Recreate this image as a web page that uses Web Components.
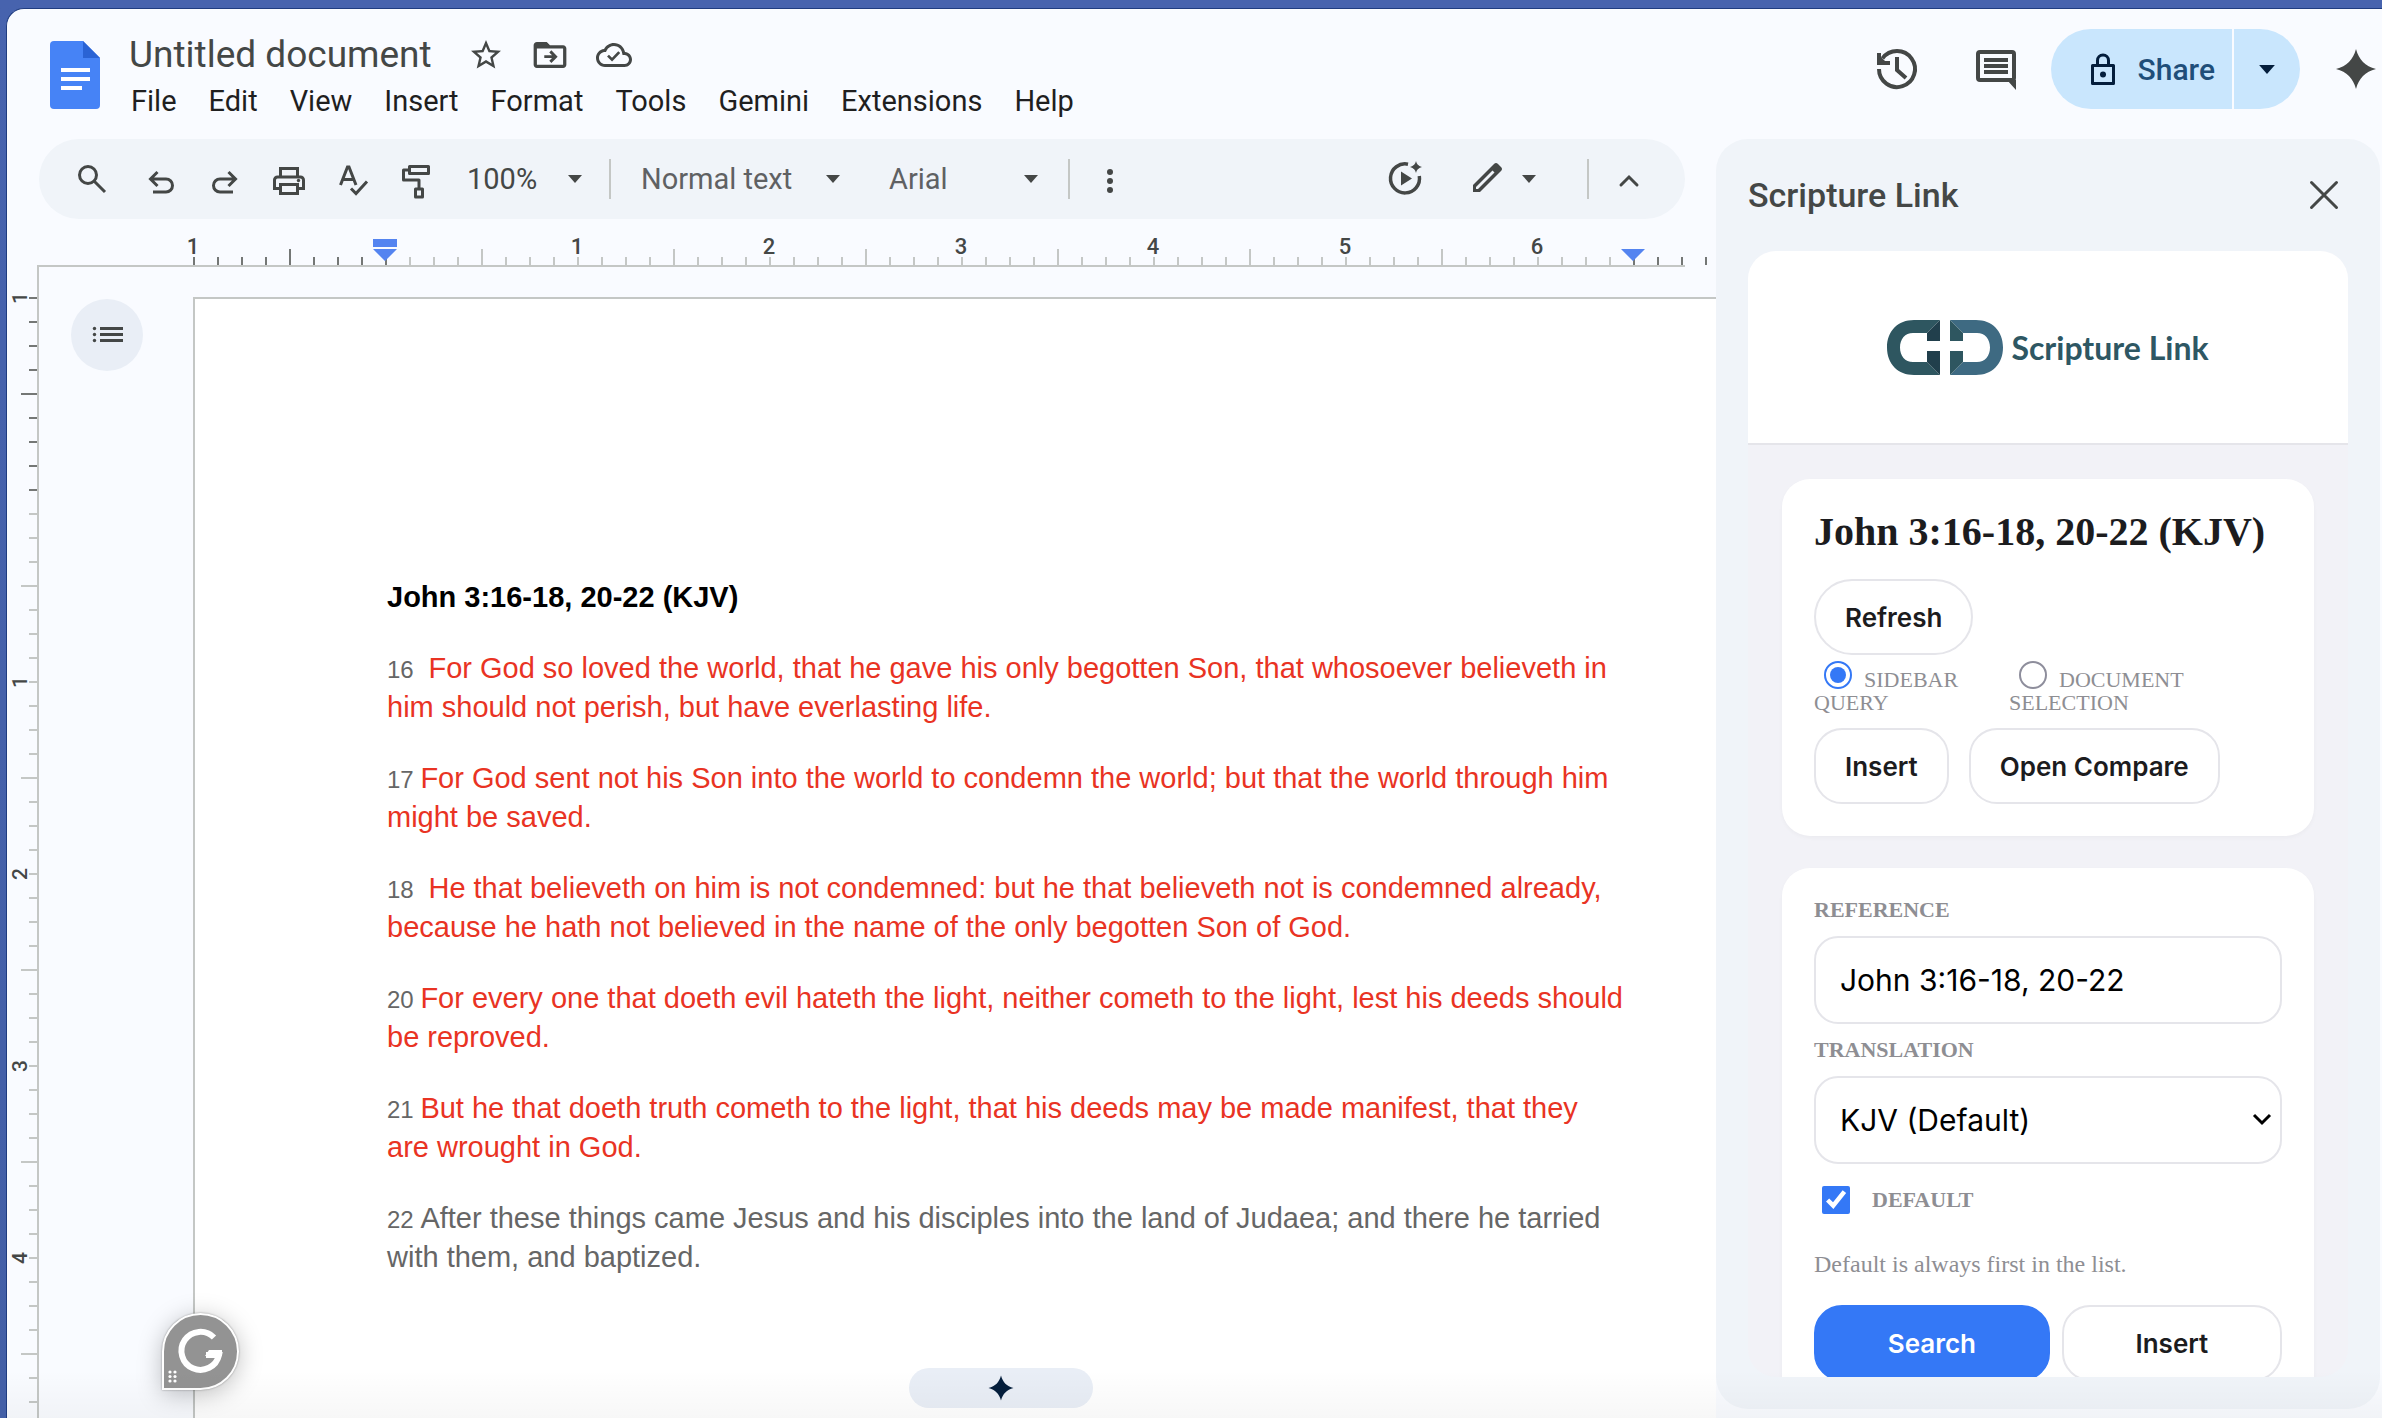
<!DOCTYPE html>
<html lang="en">
<head>
<meta charset="utf-8">
<title>Untitled document</title>
<style>
  html, body {
    height: 100%;
    margin: 0;
  }

  body {
    box-sizing: border-box;
    padding: 8px 0 0 6px;
    background: linear-gradient(#4763ae, #435fa6);
    font-family: Roboto, "Liberation Sans", sans-serif;
    color: #1f1f1f;
    overflow: hidden;
  }
</style>
</head>
<body>
<docs-app>
  <docs-header slot="header" name="Untitled document"></docs-header>
  <docs-toolbar slot="toolbar"></docs-toolbar>
  <docs-page heading="John 3:16-18, 20-22 (KJV)">
    <bible-verse number="16" wide>For God so loved the world, that he gave his only begotten Son, that whosoever believeth in him should not perish, but have everlasting life.</bible-verse>
    <bible-verse number="17">For God sent not his Son into the world to condemn the world; but that the world through him might be saved.</bible-verse>
    <bible-verse number="18" wide>He that believeth on him is not condemned: but he that believeth not is condemned already, because he hath not believed in the name of the only begotten Son of God.</bible-verse>
    <bible-verse number="20">For every one that doeth evil hateth the light, neither cometh to the light, lest his deeds should be reproved.</bible-verse>
    <bible-verse number="21">But he that doeth truth cometh to the light, that his deeds may be made manifest, that they<br>are wrought in God.</bible-verse>
    <bible-verse number="22" plain>After these things came Jesus and his disciples into the land of Judaea; and there he tarried with them, and baptized.</bible-verse>
  </docs-page>
  <side-panel slot="panel" name="Scripture Link">
    <passage-card heading="John 3:16-18, 20-22 (KJV)"></passage-card>
    <search-card></search-card>
  </side-panel>
</docs-app>

<script>
const stroke = 'fill="none" stroke="currentColor"';

const icons = {
  star: ['0 0 24 24', '<path d="M22 9.24l-7.19-.62L12 2 9.19 8.63 2 9.24l5.46 4.73L5.82 21 12 17.27 18.18 21l-1.63-7.03L22 9.24zM12 15.4l-3.76 2.27 1-4.28-3.32-2.88 4.38-.38L12 6.1l1.71 4.04 4.38.38-3.32 2.88 1 4.28L12 15.4z"/>'],
  move: ['1 1 22 22', `<path d="M20 6h-8l-2-2H4c-1.1 0-2 .9-2 2v12c0 1.1.9 2 2 2h16c1.1 0 2-.9 2-2V8c0-1.1-.9-2-2-2zm0 12H4V8h16v10z"/><path ${stroke} stroke-width="1.8" d="M8.5 13H15M12.2 9.8l3.2 3.2-3.2 3.2"/>`],
  cloud: ['0 0 24 24', `<path d="M19.35 10.04C18.67 6.59 15.64 4 12 4 9.11 4 6.6 5.64 5.35 8.04 2.34 8.36 0 10.91 0 14c0 3.31 2.69 6 6 6h13c2.76 0 5-2.24 5-5 0-2.64-2.05-4.78-4.65-4.96zM19 18H6c-2.21 0-4-1.79-4-4 0-2.05 1.53-3.76 3.56-3.97l1.07-.11.5-.95C8.08 7.14 9.94 6 12 6c2.62 0 4.88 1.86 5.39 4.43l.3 1.5 1.53.11c1.56.1 2.78 1.41 2.78 2.96 0 1.65-1.35 3-3 3z"/><path ${stroke} stroke-width="1.8" d="M8 12.4l2.7 2.7 4.8-5"/>`],
  history: ['0 0 48 48', `<path ${stroke} stroke-width="4" d="M6 24a18 18 0 1 0 3.5-10.6M6 8v10h11M24 12v13l9 8"/><path d="M4 8l12 12H4z"/>`],
  comment: ['0 0 48 48', `<rect ${stroke} stroke-width="4" x="6" y="7" width="36" height="28" rx="2"/><path d="M35 35h9v10zM12 13h24v4H12zM12 19h24v4H12zM12 25h24v4H12z"/>`],
  spark: ['0 0 48 48', '<path d="M24 4C27 15 33 21 44 24 33 27 27 33 24 44 21 33 15 27 4 24 15 21 21 15 24 4z"/>'],
  lock: ['0 0 32 40', `<path ${stroke} stroke-width="3" d="M5.5 16.5h21v18h-21zM10.5 16v-4.5a5.5 5.5 0 0 1 11 0V16" stroke-linejoin="round"/><circle cx="16" cy="25.5" r="3"/>`],
  caret: ['0 0 14 8', '<path d="M0 0h14L7 8z"/>'],
  search: ['0 0 40 40', `<circle ${stroke} stroke-width="3" cx="16" cy="16" r="8.5"/><path ${stroke} stroke-width="3" d="M22 22l11 11"/>`],
  undo: ['0 0 40 40', `<path ${stroke} stroke-width="3" d="M10 20h15a6.5 6.5 0 0 1 0 13H12M16.5 13L9.5 20l7 7"/>`],
  redo: ['0 0 40 40', `<path ${stroke} stroke-width="3" d="M30 20H15a6.5 6.5 0 0 0 0 13h13M23.5 13l7 7-7 7"/>`],
  print: ['0 0 40 40', `<path ${stroke} stroke-width="3" d="M11.5 17V9.5h17V17M11 29.5H5.5V21a3 3 0 0 1 3-3h23a3 3 0 0 1 3 3v8.5H29M11.5 25.5h17v9h-17z"/><circle cx="29.5" cy="21.5" r="1.7"/>`],
  spell: ['0 0 40 40', `<path ${stroke} stroke-width="3" d="M7.5 26L14.5 8h1.5l7 18M10 20.5h10.5M18 29.5l5 5 11-12"/>`],
  paint: ['1 0 40 40', `<path ${stroke} stroke-width="3" stroke-linejoin="round" d="M13.5 7.5h19v7h-19zM13 11H7.500v10H23v9M19.500 30h7v8h-7z"/>`],
  dots: ['0 0 40 40', '<circle cx="20" cy="13" r="3"/><circle cx="20" cy="22" r="3"/><circle cx="20" cy="31" r="3"/>'],
  play: ['0 0 40 40', `<path ${stroke} stroke-width="3.5" d="M23 5.200A14.500 14.500 0 1 0 34.300 17"/><path d="M16 12.500v14L27 19.500zM31 2c1 3.500 2 4.500 6 6-4 1.500-5 2.500-6 6-1-3.500-2-4.500-6-6 4-1.500 5-2.500 6-6z"/>`],
  pencil: ['0 0 40 40', `<path fill-rule="evenodd" d="M6 33v-7L27 5q2-2 4 0l3 3q2 2 0 4L13 33zM9 30h2L27.500 13.500l-2-2L9 28z"/>`],
  up: ['0 0 40 40', `<path ${stroke} stroke-width="3" stroke-linecap="round" d="M12 26l8-8 8 8"/>`],
  close: ['0 0 40 40', `<path ${stroke} stroke-width="3" stroke-linecap="round" d="M7.5 7.5l25 25M32.5 7.5l-25 25"/>`],
  list: ['-1 0 32 20', '<path d="M8 2h23v3H8zM8 8h23v3H8zM8 14h23v3H8z"/><circle cx="2.5" cy="3.5" r="1.7"/><circle cx="2.5" cy="9.5" r="1.7"/><circle cx="2.5" cy="15.5" r="1.7"/>'],
  down: ['0 0 20 14', `<path ${stroke} stroke-width="3" d="M2 2l8 8 8-8"/>`]
};

const icon = (name, width, height = width) => {
  const [box, shape] = icons[name];
  return `<svg width="${width}" height="${height}" viewBox="${box}" fill="currentColor" aria-hidden="true">${shape}</svg>`;
};

const buttonReset = `
  button {
    font: inherit;
    color: inherit;
    background: none;
    border: 0;
    padding: 0;
    margin: 0;
    display: inline-flex;
    align-items: center;
    justify-content: center;
  }

  svg {
    display: block;
    flex: none;
  }
`;

class BaseElement extends HTMLElement {
  constructor() {
    super();
    this.root = this.attachShadow({ mode: 'open' });
  }

  connectedCallback() {
    this.root.innerHTML = `<style>${this.styles()}</style>${this.render()}`;
  }

  styles() {
    return '';
  }

  render() {
    return '<slot></slot>';
  }
}

class DocsApp extends BaseElement {
  styles() {
    return `
      ${buttonReset}
      :host {
        box-sizing: border-box;
        height: 100%;
        display: flex;
        flex-direction: column;
        position: relative;
        background: #f9fbff;
        border: 1px solid #1f3c80;
        border-width: 1px 0 0 1px;
        border-radius: 18px 0 0 0;
        overflow: hidden;
      }

      .body {
        flex: 1;
        min-height: 0;
        display: flex;
      }

      main {
        flex: 1;
        min-width: 0;
        display: flex;
        flex-direction: column;
        position: relative;
        overflow: hidden;
      }

      .workspace {
        flex: 1;
        min-height: 0;
        display: flex;
      }

      .canvas {
        flex: 1;
        min-width: 0;
        display: flex;
        align-items: flex-start;
        gap: 50px;
        padding: 30px 0 0 32px;
        border-left: 2px solid #c4c7c5;
        overflow: hidden;
      }

      .outline {
        flex: none;
        width: 72px;
        height: 72px;
        margin-top: 2px;
        border-radius: 50%;
        background: #e9eef6;
        color: #444746;
      }

      .ask {
        position: absolute;
        left: 902px;
        bottom: 10px;
        width: 184px;
        height: 40px;
        border-radius: 20px;
        background: #e9eef6;
        color: #041e3c;
      }

      grammar-badge {
        position: absolute;
        left: 155px;
        bottom: 28px;
      }

      .shade {
        position: absolute;
        inset: auto 0 0 0;
        height: 48px;
        background: linear-gradient(transparent, rgba(0, 0, 0, 0.03));
        pointer-events: none;
      }
    `;
  }

  render() {
    /*html*/
    return `
      <slot name="header"></slot>
      <div class="body">
        <main>
          <slot name="toolbar"></slot>
          <docs-ruler></docs-ruler>
          <div class="workspace">
            <docs-ruler vertical></docs-ruler>
            <div class="canvas">
              <button class="outline" aria-label="Show outline">${icon('list', 32, 20)}</button>
              <slot></slot>
            </div>
          </div>
          <button class="ask" aria-label="Ask Gemini">${icon('spark', 30)}</button>
          <grammar-badge></grammar-badge>
        </main>
        <slot name="panel"></slot>
      </div>
      <div class="shade"></div>
    `;
  }
}

class DocsHeader extends BaseElement {
  styles() {
    return `
      ${buttonReset}
      :host {
        flex: none;
        display: flex;
        align-items: flex-start;
        padding: 20px 2px 30px 43px;
        height: 80px;
      }

      .logo {
        margin-top: 12px;
      }

      .names {
        margin-left: 29px;
        flex: 1;
      }

      .title {
        display: flex;
        align-items: center;
        gap: 28px;
        height: 52px;
        color: #444746;
      }

      h1 {
        margin: 0 8px 0 0;
        font-size: 37px;
        font-weight: 400;
        line-height: 48px;
      }

      nav {
        display: flex;
        gap: 32px;
        padding-left: 2px;
        font-size: 29px;
        line-height: 40px;
      }

      .actions {
        display: flex;
        align-items: center;
        gap: 51px;
        height: 80px;
        color: #444746;
      }

      .share {
        display: flex;
        gap: 2px;
        margin: 0 -19px 0 -20px;
        color: #041e3c;
      }

      .share button {
        height: 80px;
        background: #c9e6fd;
      }

      .share .main {
        gap: 19px;
        padding: 0 17px 0 36px;
        border-radius: 40px 0 0 40px;
        font-size: 30px;
        font-weight: 500;
      }

      .share .main span {
        color: #1f4e79;
      }

      .share .more {
        width: 66px;
        border-radius: 0 40px 40px 0;
      }
    `;
  }

  render() {
    const menus = ['File', 'Edit', 'View', 'Insert', 'Format', 'Tools', 'Gemini', 'Extensions', 'Help'];
    /*html*/
    return `
      <svg class="logo" width="50" height="68" viewBox="0 0 50 68" aria-hidden="true">
        <path fill="#4683f6" d="M4 0h29l17 17v47q0 4-4 4H4q-4 0-4-4V4q0-4 4-4z"/>
        <path fill="#2a63d4" d="M33 0l17 17H33z"/>
        <path fill="#fff" d="M11 27h29v4H11zM11 36h29v4H11zM11 45h21v4H11z"/>
      </svg>
      <div class="names">
        <div class="title">
          <h1>${this.getAttribute('name')}</h1>
          <button aria-label="Star">${icon('star', 36)}</button>
          <button aria-label="Move">${icon('move', 36)}</button>
          <button aria-label="Saved to Drive">${icon('cloud', 36)}</button>
        </div>
        <nav>${menus.map(menu => `<button>${menu}</button>`).join('')}</nav>
      </div>
      <div class="actions">
        <button aria-label="Version history">${icon('history', 48)}</button>
        <button aria-label="Comments">${icon('comment', 48)}</button>
        <div class="share">
          <button class="main">${icon('lock', 32, 40)}<span>Share</span></button>
          <button class="more" aria-label="Sharing options">${icon('caret', 16, 9)}</button>
        </div>
        <button aria-label="Gemini">${icon('spark', 48)}</button>
      </div>
    `;
  }
}

class ToolbarSelect extends BaseElement {
  styles() {
    return `
      :host {
        display: grid;
        align-items: center;
        height: 48px;
      }

      select, svg {
        grid-area: 1 / 1;
      }

      select {
        appearance: none;
        width: 100%;
        border: 0;
        padding: 0;
        background: none;
        font: inherit;
        color: inherit;
      }

      svg {
        justify-self: end;
        color: #444746;
        pointer-events: none;
      }
    `;
  }

  render() {
    return `
      <select aria-label="${this.getAttribute('label')}"><option>${this.getAttribute('value')}</option></select>
      ${icon('caret', 16, 8)}
    `;
  }
}

class DocsToolbar extends BaseElement {
  styles() {
    return `
      ${buttonReset}
      :host {
        flex: none;
        display: flex;
        align-items: center;
        height: 80px;
        margin: 0 31px 0 32px;
        padding: 0 24px 0 21px;
        box-sizing: border-box;
        border-radius: 40px;
        background: #f0f4f9;
        color: #444746;
        font-size: 29px;
      }

      button {
        width: 64px;
        height: 64px;
      }

      .search {
        margin-right: 5px;
      }

      hr {
        width: 2px;
        height: 40px;
        margin: 0 8px 0 26px;
        border: 0;
        background: #c4c7c5;
      }

      .zoom {
        width: 116px;
        margin-left: 18px;
      }

      .style {
        width: 200px;
        margin: 0 48px 0 22px;
        color: #5f6163;
      }

      .family {
        width: 150px;
        margin-right: 3px;
        color: #5f6163;
      }

      .space {
        flex: 1;
      }

      .mode {
        width: 84px;
        gap: 14px;
        margin: 0 17px 0 23px;
      }
    `;
  }

  render() {
    /*html*/
    return `
      <button class="search" aria-label="Search the menus">${icon('search', 40)}</button>
      <button aria-label="Undo">${icon('undo', 40)}</button>
      <button aria-label="Redo">${icon('redo', 40)}</button>
      <button aria-label="Print">${icon('print', 40)}</button>
      <button aria-label="Spelling">${icon('spell', 40)}</button>
      <button aria-label="Paint format">${icon('paint', 40)}</button>
      <toolbar-select class="zoom" label="Zoom" value="100%"></toolbar-select>
      <hr>
      <toolbar-select class="style" label="Styles" value="Normal text"></toolbar-select>
      <toolbar-select class="family" label="Font" value="Arial"></toolbar-select>
      <hr>
      <button aria-label="More">${icon('dots', 40)}</button>
      <div class="space"></div>
      <button aria-label="Create video">${icon('play', 40)}</button>
      <button class="mode" aria-label="Editing mode">${icon('pencil', 40)}${icon('caret', 16, 8)}</button>
      <hr>
      <button aria-label="Hide the menus">${icon('up', 40)}</button>
    `;
  }
}

// One inch is 192px, split in eight ticks. Inch 0 sits on the text margin.
class DocsRuler extends BaseElement {
  styles() {
    return `
      :host {
        flex: none;
        display: block;
        height: 46px;
        margin: 0 31px 0 30px;
        border-bottom: 2px solid #c4c7c5;
      }

      :host([vertical]) {
        width: 30px;
        height: auto;
        margin: 0;
        border: 0;
      }

      svg {
        display: block;
        overflow: visible;
      }

      text {
        font-size: 22px;
        font-weight: 500;
        text-anchor: middle;
        fill: #444746;
      }

      :host([vertical]) text {
        font-size: 21px;
      }
    `;
  }

  ticks(start, count, textEnd, draw) {
    let out = '';
    for (let i = 0; i < count; i++) {
      const dark = i <= 8 || i >= textEnd;
      const number = i % 8 === 0 && i !== 8 && i < textEnd ? Math.abs(i / 8 - 1) : '';
      out += draw(start + i * 24, i % 8 === 4 && i < textEnd ? 16 : 8, dark ? '#747775' : '#c4c7c5', number);
    }
    return out;
  }

  render() {
    if (this.hasAttribute('vertical')) {
      const marks = this.ticks(31, 47, 99, (y, size, color, number) => `
        <rect x="${30 - size}" y="${y - 1}" width="${size}" height="2" fill="${color}"/>
        ${number && `<text transform="translate(20 ${y}) rotate(-90)">${number}</text>`}`);
      return `<svg width="30" height="1150">${marks}</svg>`;
    }
    const marks = this.ticks(157, 64, 60, (x, size, color, number) => `
      <rect x="${x - 1}" y="${46 - size}" width="2" height="${size}" fill="${color}"/>
      ${number && `<text x="${x - 1}" y="35">${number}</text>`}`);
    return `
      <svg width="100%" height="46">
        ${marks}
        <path fill="#5484f0" d="M336 20h24v8h-24zM336 30h24l-12 12zM1584 30h24l-12 12z"/>
      </svg>
    `;
  }
}

class DocsPage extends BaseElement {
  styles() {
    return `
      :host {
        flex: none;
        box-sizing: border-box;
        width: 1636px;
        min-height: 2112px;
        padding: 279px 192px 192px;
        border: 2px solid #c4c7c5;
        background: #fff;
        font-family: "Liberation Sans", Arial, sans-serif;
        font-size: 29px;
        line-height: 39px;
      }

      h2 {
        margin: 0;
        font-size: 29px;
        color: #000;
      }
    `;
  }

  render() {
    return `<h2>${this.getAttribute('heading')}</h2><slot></slot>`;
  }
}

class BibleVerse extends BaseElement {
  styles() {
    return `
      :host {
        display: block;
        margin-top: 32px;
        color: #e93323;
      }

      :host([plain]) {
        color: #666;
      }

      p {
        margin: 0;
      }

      .number {
        font-size: 24px;
        line-height: 1;
        color: #666;
      }
    `;
  }

  render() {
    const gap = this.hasAttribute('wide') ? '&nbsp;' : '';
    return `<p><span class="number">${this.getAttribute('number')} </span>${gap}<slot></slot></p>`;
  }
}

class GrammarBadge extends BaseElement {
  styles() {
    return `
      :host {
        display: block;
        box-sizing: border-box;
        width: 77px;
        height: 77px;
        border: 2px solid #fff;
        border-radius: 50% 50% 50% 0;
        background: #939393;
        box-shadow: 0 0 2px rgba(0, 0, 0, 0.4), 0 4px 24px rgba(0, 0, 0, 0.25);
      }
    `;
  }

  render() {
    return `
      <svg width="73" height="73" viewBox="0 0 73 73" aria-hidden="true">
        <path fill="none" stroke="#fff" stroke-width="6" d="M50 22.5A19 19 0 1 0 55 40H42"/>
        <path fill="#fff" d="M45 35h13v6H41z"/>
        <g fill="#fff"><circle cx="6" cy="57" r="1.6"/><circle cx="11" cy="57" r="1.6"/><circle cx="6" cy="61.5" r="1.6"/><circle cx="11" cy="61.5" r="1.6"/><circle cx="6" cy="66" r="1.6"/><circle cx="11" cy="66" r="1.6"/></g>
      </svg>
    `;
  }
}

class SidePanel extends BaseElement {
  styles() {
    return `
      ${buttonReset}
      :host {
        flex: none;
        box-sizing: border-box;
        width: 664px;
        margin: 0 2px 9px 0;
        padding: 0 32px 32px;
        display: flex;
        flex-direction: column;
        border-radius: 32px;
        background: #f0f4f9;
      }

      header {
        flex: none;
        display: flex;
        align-items: center;
        justify-content: space-between;
        height: 112px;
        color: #444746;
      }

      h2 {
        margin: 0;
        font-size: 34px;
        font-weight: 500;
      }

      header button {
        width: 48px;
        height: 48px;
      }

      .frame {
        flex: 1;
        min-height: 0;
        border-radius: 28px;
        overflow: hidden;
        background: #f2f2f7;
      }

      .brand {
        display: flex;
        align-items: center;
        justify-content: center;
        gap: 8px;
        height: 192px;
        border-bottom: 2px solid #e5e5ea;
        background: #fff;
        color: #2e5763;
        font-family: Lato, sans-serif;
        font-size: 32px;
        font-weight: 700;
      }

      .cards {
        display: flex;
        flex-direction: column;
        gap: 32px;
        padding: 34px;
        font-family: "Liberation Serif", "Times New Roman", serif;
      }
    `;
  }

  render() {
    const name = this.getAttribute('name');
    /*html*/
    return `
      <header>
        <h2>${name}</h2>
        <button aria-label="Close">${icon('close', 40)}</button>
      </header>
      <div class="frame">
        <div class="brand">
          <svg width="116" height="55" viewBox="0 0 116 55" aria-hidden="true">
            <path fill="#2e5660" d="M53 0H27C11 0 0 11 0 27.500S11 55 27 55h26L40 42H26c-8 0-13-6-13-14.500S18 13 26 13h14z"/>
            <path fill="#213f4c" d="M53 0v21H40v-8zM53 55V31H40v11z"/>
            <path fill="#3e6a82" d="M63 0h26c16 0 27 11 27 27.500S105 55 89 55H63l13-13h14c8 0 13-6 13-14.500S98 13 90 13H76z"/>
            <path fill="#2e5660" d="M63 0v21h13v-8zM63 55V31h13v11z"/>
          </svg>
          <span>${name}</span>
        </div>
        <div class="cards"><slot></slot></div>
      </div>
    `;
  }
}

const cardStyles = `
  :host {
    display: flex;
    flex-direction: column;
    padding: 32px;
    border-radius: 28px;
    background: #fff;
    box-shadow: 0 2px 4px rgba(0, 0, 0, 0.03);
    color: #8e8e93;
    font-size: 22px;
  }

  button {
    box-sizing: border-box;
    height: 76px;
    padding: 0 29px;
    border: 2px solid #e5e5ea;
    border-radius: 28px;
    background: #fff;
    color: #1c1c1e;
    font-family: Inter, sans-serif;
    font-size: 26px;
    font-weight: 600;
  }

  input[type=radio], input[type=checkbox] {
    width: 28px;
    height: 28px;
    margin: 0;
    accent-color: #3478f6;
  }
`;

class PassageCard extends BaseElement {
  styles() {
    return `
      ${cardStyles}
      h1 {
        margin: 0 0 26px;
        font-size: 40px;
        line-height: 42px;
        color: #1c1c1e;
      }

      .refresh {
        align-self: flex-start;
        border-radius: 38px;
      }

      .source {
        display: grid;
        grid-template-columns: 175px 1fr;
        column-gap: 20px;
        margin: 6px 0 14px;
        line-height: 23px;
      }

      .source input {
        appearance: none;
        box-sizing: border-box;
        margin: 0 12px 0 10px;
        padding: 4px;
        border: 2px solid #8e8e9c;
        border-radius: 50%;
        vertical-align: -2px;
      }

      .source input:checked {
        border-color: #3478f6;
        background: #3478f6 content-box;
      }

      .actions {
        display: flex;
        gap: 20px;
      }
    `;
  }

  render() {
    /*html*/
    return `
      <h1>${this.getAttribute('heading')}</h1>
      <button class="refresh">Refresh</button>
      <div class="source">
        <label><input type="radio" name="source" checked>SIDEBAR QUERY</label>
        <label><input type="radio" name="source">DOCUMENT SELECTION</label>
      </div>
      <div class="actions">
        <button>Insert</button>
        <button>Open Compare</button>
      </div>
    `;
  }
}

class SearchCard extends BaseElement {
  styles() {
    return `
      ${cardStyles}
      label {
        line-height: 20px;
        font-weight: 700;
      }

      .box {
        display: grid;
        align-items: center;
        margin: 16px 0;
        color: #000;
      }

      .box > * {
        grid-area: 1 / 1;
      }

      .box svg {
        justify-self: end;
        margin-right: 10px;
        pointer-events: none;
      }

      .field {
        appearance: none;
        box-sizing: border-box;
        width: 100%;
        height: 88px;
        padding: 0 24px;
        border: 2px solid #e5e5ea;
        border-radius: 24px;
        background: #fff;
        color: #000;
        font-family: Inter, sans-serif;
        font-size: 30px;
      }

      .default {
        display: flex;
        align-items: center;
        gap: 22px;
        height: 40px;
        padding-left: 8px;
      }

      .hint {
        margin: 30px 0 27px;
        font-size: 24px;
        line-height: 28px;
      }

      .actions {
        display: flex;
        gap: 12px;
      }

      .actions button {
        flex: 1 1 auto;
      }

      .actions .primary {
        border-color: #3478f6;
        background: #3478f6;
        color: #fff;
      }
    `;
  }

  render() {
    /*html*/
    return `
      <label for="reference">REFERENCE</label>
      <div class="box"><input class="field" id="reference" type="text" value="John 3:16-18, 20-22"></div>
      <label for="translation">TRANSLATION</label>
      <div class="box">
        <select class="field" id="translation"><option>KJV (Default)</option></select>
        ${icon('down', 20, 14)}
      </div>
      <label class="default"><input type="checkbox" checked>DEFAULT</label>
      <p class="hint">Default is always first in the list.</p>
      <div class="actions">
        <button class="primary">Search</button>
        <button>Insert</button>
      </div>
    `;
  }
}

customElements.define('docs-app', DocsApp);
customElements.define('docs-header', DocsHeader);
customElements.define('docs-toolbar', DocsToolbar);
customElements.define('toolbar-select', ToolbarSelect);
customElements.define('docs-ruler', DocsRuler);
customElements.define('docs-page', DocsPage);
customElements.define('bible-verse', BibleVerse);
customElements.define('grammar-badge', GrammarBadge);
customElements.define('side-panel', SidePanel);
customElements.define('passage-card', PassageCard);
customElements.define('search-card', SearchCard);
</script>
</body>
</html>
